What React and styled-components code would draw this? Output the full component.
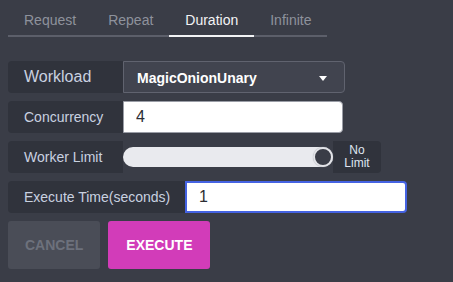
import React, { useState } from "react";
import styled, { createGlobalStyle } from "styled-components";

const GlobalStyle = createGlobalStyle`
  html, body {
    margin: 0;
    padding: 0;
    background: #3a3d47;
  }
  body {
    font-family: "Liberation Sans", Arial, sans-serif;
    color: #c9d1e0;
  }
`;

const Page = styled.div`
  width: 453px;
  height: 282px;
  padding: 0 8px;
  box-sizing: border-box;
  display: flex;
  flex-flow: column;
`;

const Tabs = styled.div`
  display: flex;
  width: 319px;
  border-bottom: 2px solid #5c5f6a;
  margin: 0 0 24px;
`;

const Tab = styled.button`
  padding: 12px 16px 7px;
  margin: 0 0 -2px;
  border: none;
  border-bottom: 2px solid ${({ $active }) => ($active ? "#f2f3f5" : "transparent")};
  background: none;
  font: 14px/16px "Liberation Sans", Arial, sans-serif;
  color: ${({ $active }) => ($active ? "#f2f3f5" : "#8e929c")};
  cursor: pointer;
`;

const Form = styled.div`
  display: flex;
  flex-flow: column;
  gap: 8px;
`;

const Row = styled.div`
  display: flex;
  height: 32px;
`;

const Label = styled.div`
  width: ${({ $width }) => $width}px;
  box-sizing: border-box;
  padding: 0 16px;
  display: flex;
  align-items: center;
  background: #30333c;
  border-radius: 4px 0 0 4px;
  font-size: ${({ $big }) => ($big ? "16px" : "14px")};
  color: #c9d1e0;
  white-space: nowrap;
`;

const Select = styled.div`
  width: 222px;
  box-sizing: border-box;
  padding: 2px 13px 0;
  display: flex;
  align-items: center;
  justify-content: space-between;
  background: #41444f;
  border: 1px solid #60636f;
  border-radius: 0 4px 4px 0;
  font-weight: 700;
  font-size: 14px;
  color: #ffffff;
`;

const Caret = styled.span`
  width: 0;
  height: 0;
  border-left: 4px solid transparent;
  border-right: 4px solid transparent;
  border-top: 5px solid #ffffff;
  margin: 0 4px 0 0;
`;

const Input = styled.input`
  width: ${({ $width }) => $width}px;
  height: 32px;
  box-sizing: border-box;
  padding: 0 12px;
  background: #ffffff;
  border: ${({ $focus }) => ($focus ? "2px solid #4563e2" : "1px solid #9a9da6")};
  border-radius: 0 4px 4px 0;
  outline: none;
  font: 16px "Liberation Sans", Arial, sans-serif;
  color: #2b2d33;
  caret-color: #1b1d22;
`;

const SliderWrap = styled.div`
  width: 210px;
  display: flex;
  align-items: center;
`;

const Track = styled.div`
  position: relative;
  width: 100%;
  height: 20px;
  background: #e9eaee;
  border-radius: 10px;
`;

const Thumb = styled.span`
  position: absolute;
  right: 0;
  top: 0;
  width: 20px;
  height: 20px;
  box-sizing: border-box;
  border-radius: 50%;
  background: #3a3d47;
  border: 2px solid #e2e3e7;
  box-shadow: 0 0 1px #9a9da6;
`;

const LimitBadge = styled.div`
  width: 48px;
  display: flex;
  flex-flow: column;
  align-items: center;
  justify-content: center;
  background: #30333c;
  border-radius: 0 4px 4px 0;
  font-size: 12px;
  line-height: 13px;
  color: #dfe5f0;
`;

const Buttons = styled.div`
  display: flex;
  gap: 8px;
`;

const Button = styled.button`
  height: 48px;
  padding: 0 ${({ $pad }) => $pad}px;
  border: none;
  border-radius: 3px;
  background: ${({ $primary }) => ($primary ? "#d23cb9" : "#4a4d57")};
  color: ${({ $primary }) => ($primary ? "#ffffff" : "#6d717c")};
  font: 700 14px "Liberation Sans", Arial, sans-serif;
  cursor: ${({ disabled }) => (disabled ? "default" : "pointer")};
`;

const tabs = ["Request", "Repeat", "Duration", "Infinite"];

function App() {
  const [tab, setTab] = useState("Duration");
  const [concurrency, setConcurrency] = useState("4");
  const [seconds, setSeconds] = useState("1");

  return (
    <>
      <GlobalStyle />
      <Page>
        <Tabs>
          {tabs.map((name) => (
            <Tab key={name} type="button" $active={tab === name} onClick={() => setTab(name)}>
              {name}
            </Tab>
          ))}
        </Tabs>
        <Form>
          <Row>
            <Label $width={115} $big>Workload</Label>
            <Select>
              MagicOnionUnary
              <Caret />
            </Select>
          </Row>
          <Row>
            <Label $width={115}>Concurrency</Label>
            <Input $width={220} value={concurrency} onChange={(e) => setConcurrency(e.target.value)} />
          </Row>
          <Row>
            <Label $width={115}>Worker Limit</Label>
            <SliderWrap>
              <Track>
                <Thumb />
              </Track>
            </SliderWrap>
            <LimitBadge>
              <span>No</span>
              <span>Limit</span>
            </LimitBadge>
          </Row>
          <Row>
            <Label $width={177}>Execute Time(seconds)</Label>
            <Input $width={222} $focus value={seconds} onChange={(e) => setSeconds(e.target.value)} autoFocus />
          </Row>
          <Buttons>
            <Button type="button" $pad={17} disabled>CANCEL</Button>
            <Button type="button" $pad={18} $primary>EXECUTE</Button>
          </Buttons>
        </Form>
      </Page>
    </>
  );
}

export default App;
